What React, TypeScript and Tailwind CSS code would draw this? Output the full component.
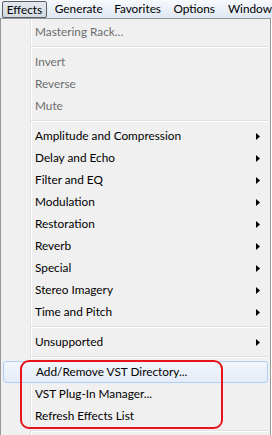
type Item = { label: string; disabled?: boolean; sub?: boolean; hot?: boolean } | 'sep'

const items: Item[] = [
  { label: 'Mastering Rack...', disabled: true },
  'sep',
  { label: 'Invert', disabled: true },
  { label: 'Reverse', disabled: true },
  { label: 'Mute', disabled: true },
  'sep',
  { label: 'Amplitude and Compression', sub: true },
  { label: 'Delay and Echo', sub: true },
  { label: 'Filter and EQ', sub: true },
  { label: 'Modulation', sub: true },
  { label: 'Restoration', sub: true },
  { label: 'Reverb', sub: true },
  { label: 'Special', sub: true },
  { label: 'Stereo Imagery', sub: true },
  { label: 'Time and Pitch', sub: true },
  'sep',
  { label: 'Unsupported', sub: true },
  'sep',
  { label: 'Add/Remove VST Directory...', hot: true },
  { label: 'VST Plug-In Manager...' },
  { label: 'Refresh Effects List' },
  'sep',
]

function Arrow() {
  return (
    <svg width="4" height="7" viewBox="0 0 4 7" className="mr-[10px]">
      <path d="M0 0 L4 3.5 L0 7 Z" fill="#000" />
    </svg>
  )
}

export default function App() {
  return (
    <div className="relative w-[272px] h-[435px] overflow-hidden bg-white font-['Lato',sans-serif] text-[11.8px]">
      {/* menu bar */}
      <div className="h-[18px] flex items-center bg-[linear-gradient(to_bottom,#f7f9fc,#dfe7f3)] text-black whitespace-nowrap">
        <div className="ml-[2px] h-[17px] mt-[1px] w-[46px] justify-center flex items-center rounded-[2px] border border-[#5a5f66] bg-[linear-gradient(to_bottom,#e4e8ee,#d3d9e2)]">
          Effects
        </div>
        <div className="ml-[8px] w-[61px] leading-[18px]">Generate</div>
        <div className="w-[61px] leading-[18px]">Favorites</div>
        <div className="w-[56px] leading-[18px]">Options</div>
        <div className="leading-[18px]">Window</div>
      </div>

      {/* dropdown */}
      <div className="w-[271px] border border-[#979797] pt-[2px] bg-[linear-gradient(to_right,#f0f0f0_29px,#e2e3e3_29px,#e2e3e3_30px,#ffffff_30px,#ffffff_31px,#f0f0f0_31px)]">
        {items.map((it, i) =>
          it === 'sep' ? (
            <div key={i} className="h-[8px] pt-[3px] pl-[30px] pr-[2px]">
              <div className="h-[2px] border-t border-[#e0e0e0] border-b border-b-white" />
            </div>
          ) : (
            <div
              key={i}
              className={`h-[22px] flex items-center justify-between ${
                it.hot
                  ? 'mx-[2px] pl-[32px] rounded-[3px] border border-[#aecff7] bg-[linear-gradient(to_bottom,#f2f6fc,#e4ecf7)]'
                  : 'pl-[34px]'
              } ${it.disabled ? 'text-[#6d6d6d]' : 'text-black'}`}
            >
              <span>{it.label}</span>
              {it.sub && <Arrow />}
            </div>
          ),
        )}
      </div>

      {/* red annotation */}
      <div className="absolute left-[20px] top-[360px] w-[203px] h-[69px] border-2 border-[#e8141c] rounded-[9px]" />
    </div>
  )
}
